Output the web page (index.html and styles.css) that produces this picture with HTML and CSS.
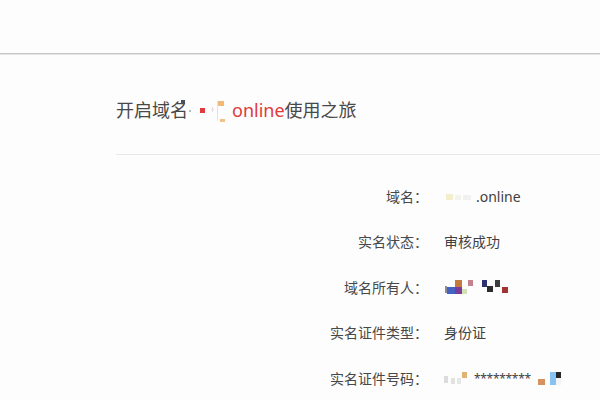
FILE: index.html
```html
<!DOCTYPE html>
<html lang="zh">
<head>
<meta charset="utf-8">
<link rel="stylesheet" href="styles.css">
</head>
<body>
<div class="topbar"></div>
<main class="content">
  <h1 class="title">开启域名<svg class="mask mask-title" width="44" height="24" viewBox="0 0 44 24"><rect x="-7" y="2" width="4" height="4" fill="#4b505a"/><rect x="1" y="12" width="2" height="2" fill="#b8bcc4"/><rect x="12" y="10" width="5" height="5" fill="#e23b3b"/><rect x="23" y="11" width="3" height="1" fill="#f0d8e0"/><rect x="24" y="9" width="1" height="5" fill="#f0d8e0"/><rect x="29" y="3" width="1" height="20" fill="#e4e4e4"/><rect x="30" y="3" width="6" height="5" fill="#f2b878"/><rect x="32" y="21" width="5" height="3" fill="#f2c08a"/></svg><span class="red">online</span>使用之旅</h1>
  <div class="rows">
    <div class="label">域名：</div>
    <div class="value"><svg class="mask" width="32" height="12" viewBox="0 0 32 12"><rect x="2" y="3" width="7" height="6" fill="#f3efcc"/><rect x="11" y="4" width="6" height="5" fill="#f4f4ee"/><rect x="19" y="4" width="8" height="5" fill="#f1f1f1"/></svg>.online</div>
    <div class="label">实名状态：</div>
    <div class="value">审核成功</div>
    <div class="label">域名所有人：</div>
    <div class="value"><svg class="mask" width="66" height="16" viewBox="0 0 66 16"><rect x="1" y="6" width="2" height="7" fill="#8a8e98"/><rect x="11" y="0" width="7" height="7" fill="#c47a3e"/><rect x="3" y="7" width="8" height="7" fill="#4462c4"/><rect x="11" y="7" width="7" height="7" fill="#7a3c98"/><rect x="18" y="9" width="5" height="5" fill="#d3e2b4"/><rect x="24" y="0" width="5" height="6" fill="#c4828e"/><rect x="38" y="0" width="5" height="7" fill="#2e3070"/><rect x="43" y="6" width="6" height="6" fill="#2c2c2c"/><rect x="51" y="0" width="5" height="7" fill="#3c3c3c"/><rect x="58" y="7" width="6" height="6" fill="#a43232"/></svg></div>
    <div class="label">实名证件类型：</div>
    <div class="value">身份证</div>
    <div class="label">实名证件号码：</div>
    <div class="value"><svg class="mask" width="28" height="14" viewBox="0 0 28 14"><rect x="0" y="4" width="4" height="7" fill="#dcdcdc"/><rect x="7" y="6" width="4" height="6" fill="#e2e2e2"/><rect x="13" y="6" width="4" height="6" fill="#e6e6e6"/><rect x="18" y="0" width="5" height="6" fill="#e2b272"/></svg><span class="stars">*********</span><svg class="mask" width="30" height="14" viewBox="0 0 30 14"><rect x="5" y="7" width="7" height="6" fill="#d6925e"/><rect x="17" y="0" width="6" height="13" fill="#86c2f2"/><rect x="23" y="0" width="5" height="6" fill="#262626"/><rect x="23" y="6" width="5" height="7" fill="#f4f4f4"/></svg></div>
  </div>
</main>
</body>
</html>
```

FILE: styles.css
```css
html, body {
  margin: 0;
  padding: 0;
  background: #fdfdfd;
  font-family: "Noto Sans", "Noto Sans CJK SC", sans-serif;
  color: #3a3a3a;
}
.topbar {
  height: 53px;
  border-bottom: 1px solid #c6c6c6;
  box-shadow: 0 1px 0 #e6e6e6;
}
.content {
  margin-left: 116px;
}
.title {
  margin: 0;
  padding-top: 44px;
  padding-bottom: 32px;
  height: 24px;
  line-height: 24px;
  font-size: 18px;
  font-weight: 400;
  color: #484848;
  border-bottom: 1px solid #e8e8e8;
  white-space: nowrap;
}
.mask {
  display: inline-block;
  vertical-align: middle;
  overflow: visible;
}
.mask-title {
  vertical-align: top;
}
.red {
  color: #e0393a;
}
.rows {
  display: grid;
  grid-template-columns: 312px 1fr;
  column-gap: 16px;
  grid-auto-rows: 45.5px;
  padding-top: 19px;
  font-size: 14px;
  line-height: 22px;
}
.label, .value {
  display: flex;
  align-items: center;
  white-space: nowrap;
}
.label {
  justify-content: flex-end;
  color: #484848;
}
.value {
  color: #404040;
}
.stars {
  font-size: 12px;
  letter-spacing: -0.3px;
  margin: 0 2px;
}
```
